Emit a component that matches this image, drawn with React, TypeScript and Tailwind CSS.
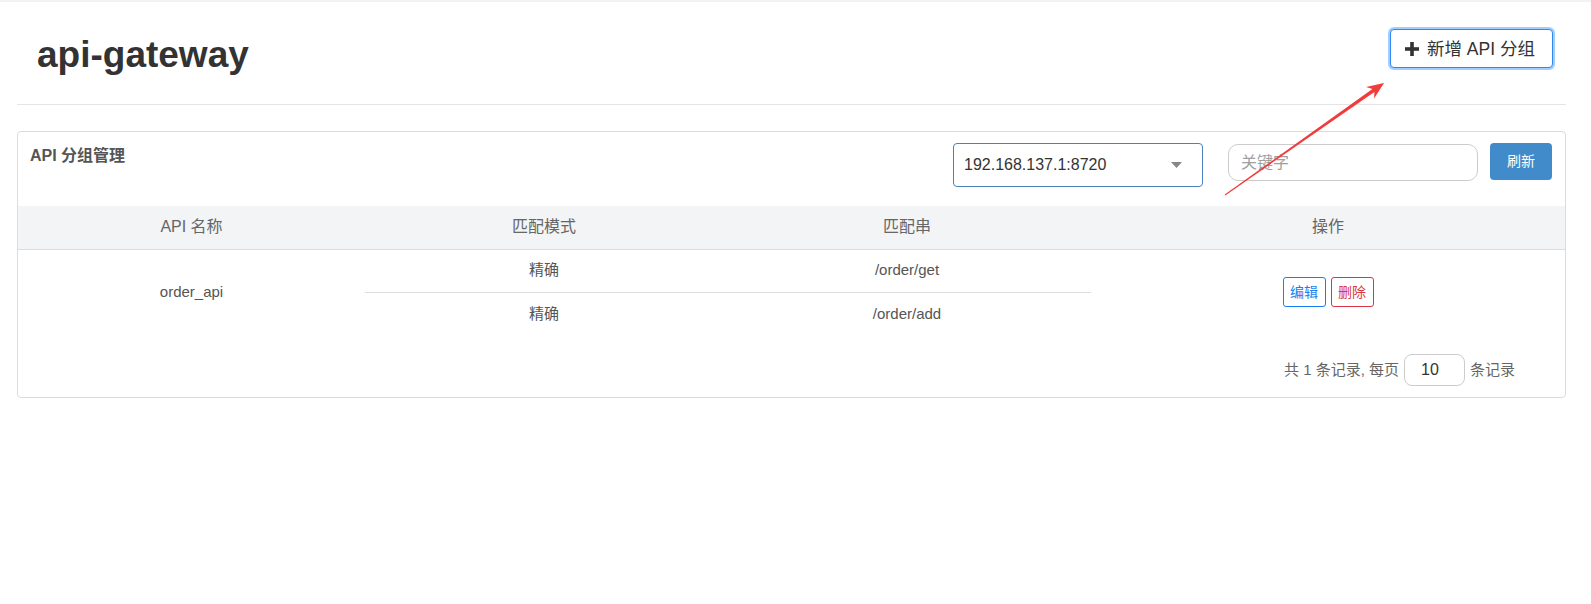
import React from 'react';

const font = "font-['Liberation_Sans','Noto_Sans_CJK_SC',sans-serif]";

function PlusIcon() {
  return (
    <svg width="14" height="14" viewBox="0 0 14 14" className="shrink-0">
      <rect x="5.2" y="0" width="3.6" height="14" fill="#333" />
      <rect x="0" y="5.2" width="14" height="3.6" fill="#333" />
    </svg>
  );
}

function Arrow() {
  return (
    <svg
      width="1591"
      height="604"
      className="pointer-events-none absolute left-0 top-0"
    >
      <polygon
        points="1225.3,195.4 1374.4,91.9 1374.1,98.4 1384,83 1366.1,87.0 1372.4,88.9 1224.7,194.6"
        fill="#f23c3c"
      />
    </svg>
  );
}

export default function App() {
  return (
    <div className={`relative min-h-screen bg-white text-[#333] ${font}`}>
      <div className="h-[2px] bg-[#f2f2f2]" />
      <div className="pl-[17px] pr-[25px]">
        {/* page header */}
        <div className="flex h-[103px] items-start justify-between border-b border-[#e5e5e5]">
          <h1 className="mt-[33px] pl-5 text-[37px] font-bold leading-[40px] text-[#333]">
            api-gateway
          </h1>
          <button className="mr-[13px] mt-[27px] flex h-[39px] w-[163px] items-center gap-[8px] rounded-[4px] border border-[#2f86f6] bg-white pl-[14px] text-[17.5px] text-[#333] shadow-[0_0_0_2px_rgba(90,165,255,0.55)]">
            <PlusIcon />
            <span className="pt-[1px]">新增 API 分组</span>
          </button>
        </div>

        {/* panel */}
        <div className="mt-[26px] overflow-hidden rounded-[4px] border border-[#dcdcdc]">
          <div className="flex h-[74px] items-start pl-3 pr-[13px] pt-[11px]">
            <div className="mt-[1px] flex-1 text-[16px] font-bold leading-[24px] text-[#555]">
              API 分组管理
            </div>
            <div className="flex h-[44px] w-[250px] items-center justify-between rounded-[4px] border border-[#4b7fbf] pl-[10px] pr-[20px] text-[16px] text-[#333]">
              <span>192.168.137.1:8720</span>
              <svg width="11" height="6" viewBox="0 0 11 6">
                <polygon points="0,0 11,0 5.5,6" fill="#888" />
              </svg>
            </div>
            <input
              placeholder="关键字"
              className="ml-[25px] mt-[1px] h-[37px] w-[250px] rounded-[10px] border border-[#cccccc] px-3 text-[16px] outline-none placeholder:text-[#a0a0a0]"
            />
            <button className="ml-[12px] h-[37px] w-[62px] rounded-[4px] bg-[#428bca] text-[14px] text-white">
              刷新
            </button>
          </div>

          <table className="w-full table-fixed border-collapse">
            <colgroup>
              <col className="w-[347px]" />
              <col className="w-[358px]" />
              <col className="w-[368px]" />
              <col />
            </colgroup>
            <thead>
              <tr className="h-[43px] border-b border-[#dddddd] bg-[#f3f4f5] text-[16px] text-[#666]">
                <th className="font-normal">API 名称</th>
                <th className="font-normal">匹配模式</th>
                <th className="font-normal">匹配串</th>
                <th className="font-normal">操作</th>
              </tr>
            </thead>
            <tbody className="text-[15px] text-[#555]">
              <tr className="h-[43px]">
                <td rowSpan={2} className="pb-[1px] text-center">
                  order_api
                </td>
                <td className="text-center">精确</td>
                <td className="text-center">/order/get</td>
                <td rowSpan={2} className="text-center">
                  <div className="flex justify-center gap-[5px]">
                    <button className="h-[30px] w-[43px] rounded-[3px] border border-[#1a7ff0] text-[14px] text-[#1a7ff0]">
                      编辑
                    </button>
                    <button className="h-[30px] w-[43px] rounded-[3px] border border-[#dc3545] text-[14px] text-[#dc3545]">
                      删除
                    </button>
                  </div>
                </td>
              </tr>
              <tr className="h-[43px]">
                <td className="border-t border-[#dddddd] text-center">精确</td>
                <td className="border-t border-[#dddddd] text-center">/order/add</td>
              </tr>
            </tbody>
          </table>

          <div className="flex items-center justify-end gap-[5px] pb-[11px] pr-[50px] pt-[19px] text-[15px] text-[#666]">
            <span>共 1 条记录, 每页</span>
            <input
              defaultValue="10"
              className="h-[32px] w-[61px] rounded-[8px] border border-[#cccccc] pl-[16px] text-[16px] text-[#333] outline-none"
            />
            <span>条记录</span>
          </div>
        </div>
      </div>
      <Arrow />
    </div>
  );
}
